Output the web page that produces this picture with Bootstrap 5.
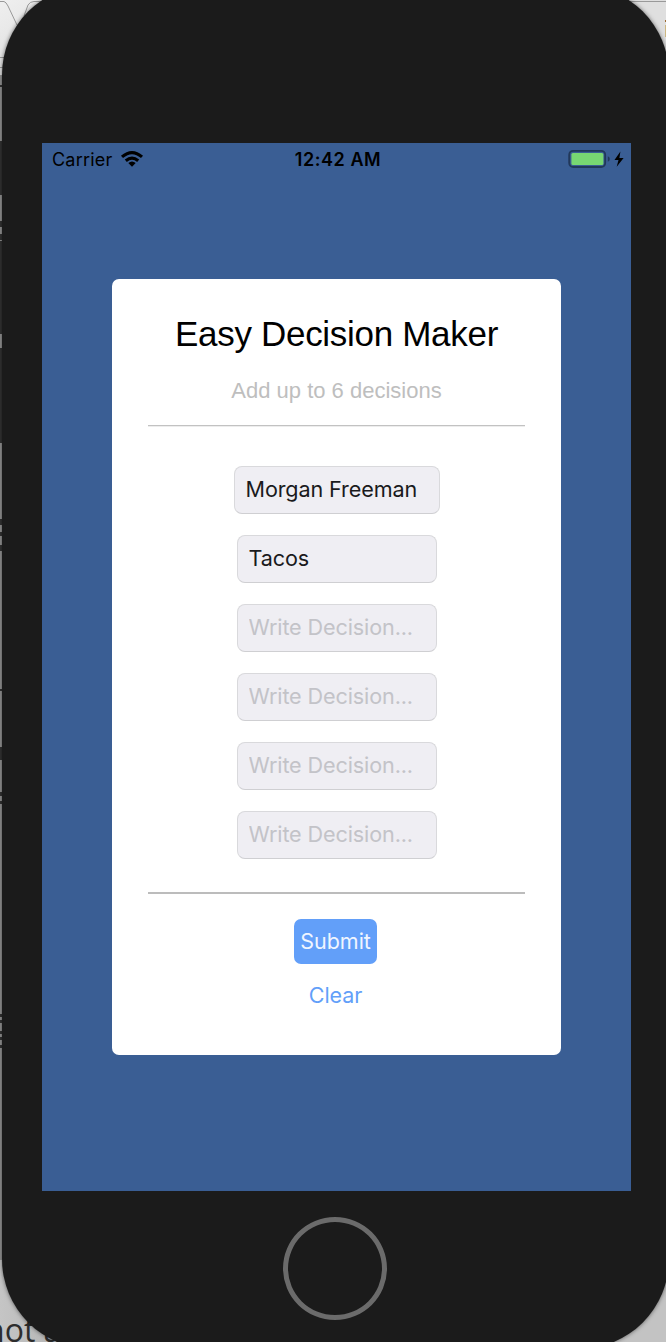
<!DOCTYPE html>
<html lang="en">
<head>
<meta charset="utf-8">
<meta name="viewport" content="width=device-width, initial-scale=1">
<title>Easy Decision Maker</title>
<link href="https://cdn.jsdelivr.net/npm/bootstrap@5.3.0/dist/css/bootstrap.min.css" rel="stylesheet">
<style>
body { font-family: Inter, "Liberation Sans", sans-serif; color: #000; }
.stage { width: 666px; height: 1342px; background: #c4c4c4; }
.backdrop { inset: 0; }
.phone { flex: none; width: 667px; height: 1364px; margin: -15px 0 0 2px; padding: 158px 38px 0 40px; border-radius: 90px; background: #1b1b1b; box-shadow: 0 0 4px rgba(0,0,0,.55); }
.screen { height: 1048px; background: #3a5e94; }
.status { height: 32px; padding: 0 7px 0 10px; font-size: 18px; line-height: 32px; }
.status > * { flex: 1 1 0; }
.carrier { letter-spacing: .2px; }
.carrier span, .clock { padding-top: 1px; }
.clock { font-weight: 600; letter-spacing: .55px; }
.panel { width: 449px; height: 776px; margin: 104px 0 0 70px; padding: 0 36px; border: 0; border-radius: 7px; background: #fff; color: #000; }
.panel h1 { font: 400 35px/40px "Liberation Sans", sans-serif; letter-spacing: -.3px; margin: 35px -10px 0; white-space: nowrap; }
.hint { font: 22px/26px "Liberation Sans", sans-serif; color: #bebebe; margin: 24px 0 0; }
.rule { align-self: stretch; height: 2px; }
.rule-top { margin-top: 21px; background: linear-gradient(#c2c2c2 50%, #ededed 50%); }
.rule-bottom { background: #bcbcbc; margin-top: 33px; }
.choices { gap: 21.1px; margin-top: 39px; }
.choice { width: 200px; height: 48px; padding: 0 11px 2px; border: 1px solid #d9d9dc; border-bottom-color: #cfcfd2; border-radius: 8px; background: #efeef3; color: #1a1a1c; font-size: 21.6px; letter-spacing: -.12px; line-height: 44px; }
.choice:focus { background: #efeef3; }
.choice.wide { width: 206px; }
.choice::placeholder { color: #c3c3c8; opacity: 1; }
.submit { width: 83px; height: 45px; margin: 25px 2px 0 0; padding: 0; border: 0; border-radius: 7px; background: #629ff9; color: #eff5ff; font-size: 21.5px; line-height: 45px; }
.clear { margin: 16px 2px 0 0; padding: 0; border: 0; color: #629ff9; font-size: 21.5px; letter-spacing: -.1px; line-height: 30px; text-decoration: none; }
.home { width: 104px; height: 103px; margin: 26px 0 0 241px; border: 5px solid #6b6b6b; }
</style>
</head>
<body>
<div class="stage position-relative overflow-hidden">
  <svg class="backdrop position-absolute" width="666" height="1342" aria-hidden="true">
    <defs>
      <linearGradient id="tl" x1="0" y1="0" x2="1" y2="1"><stop offset="0" stop-color="#efefef"/><stop offset="1" stop-color="#d0d0d0"/></linearGradient>
      <linearGradient id="bl" x1="0" x2="1"><stop offset="0" stop-color="#c5c5c5"/><stop offset="1" stop-color="#a4a4a4"/></linearGradient>
    </defs>
    <rect width="120" height="80" fill="url(#tl)"/>
    <rect x="600" width="66" height="80" fill="#dfdfdf"/>
    <rect y="1250" width="120" height="92" fill="url(#bl)"/>
    <rect x="590" y="1260" width="76" height="82" fill="#c3c3c3"/>
    <path d="M0 1.5H4Q6 2 8 6L17 25M24 16L28 5Q30 1.5 34 1.5H45M620 1.5H666M0 57.5H6M0 67.5H3" fill="none" stroke="#999" />
    <path d="M665 20h1v2h-1z" fill="#9d6a31"/><path d="M665 25h1v12h-1z" fill="#cdb782"/>
    <rect y="75" width="2" height="1185" fill="#959595"/>
    <path d="M0 85h2v2H0zM0 141h2v54H0zM0 221h2v6H0zM0 234h2v6H0zM0 241h2v93H0zM0 348h2v95H0zM0 519h2v6H0zM0 532h2v4H0zM0 545h2v6H0zM0 689h2v2H0zM0 747h2v13H0zM0 792h2v4H0zM0 801h2v3H0zM0 1014h2v3H0zM0 1020h2v3H0zM0 1031h2v3H0zM0 1037h2v3H0zM0 1045h2v3H0z" fill="#333"/>
    <text x="-15" y="1342" font-family="Open Sans, sans-serif" font-size="32" fill="#2d2d2d">not a</text>
  </svg>
  <main class="phone position-relative">
    <section class="screen">
      <div class="status d-flex align-items-center">
        <div class="carrier d-flex align-items-center">
          <span>Carrier</span>
          <svg class="ms-2" width="24" height="18" viewBox="0 0 24 18" fill="none" stroke="#000" stroke-width="3.2" aria-label="Wi-Fi"><path d="M2 6.9Q12-1.6 22 6.9M5.8 10.7Q12 5.6 18.2 10.7"/><path d="M8.3 13Q12 10 15.7 13L12 16.7Z" fill="#000" stroke="none"/></svg>
        </div>
        <div class="clock text-center">12:42 AM</div>
        <div class="d-flex justify-content-end align-items-center">
          <svg width="56" height="20" viewBox="0 0 56 20" aria-label="Battery charging"><rect x="1.2" y="1.8" width="36" height="16.2" rx="4" fill="none" stroke="#21385a" stroke-width="1.8"/><rect x="3.4" y="4" width="32" height="12" rx="1.5" fill="#77d772"/><path d="M39.8 7.2q2 .7 2 2.8t-2 2.8z" fill="#21385a"/><path d="M52.4 2.5L46.5 11h4l-1.8 6.8L55.6 9h-4.2z" fill="#000"/></svg>
        </div>
      </div>
      <form class="panel card align-items-center">
        <h1>Easy Decision Maker</h1>
        <p class="hint">Add up to 6 decisions</p>
        <div class="rule rule-top"></div>
        <div class="choices d-flex flex-column align-items-center">
          <input class="choice wide form-control" value="Morgan Freeman" aria-label="Decision 1">
          <input class="choice form-control" value="Tacos" aria-label="Decision 2">
          <input class="choice form-control" placeholder="Write Decision..." aria-label="Decision 3">
          <input class="choice form-control" placeholder="Write Decision..." aria-label="Decision 4">
          <input class="choice form-control" placeholder="Write Decision..." aria-label="Decision 5">
          <input class="choice form-control" placeholder="Write Decision..." aria-label="Decision 6">
        </div>
        <div class="rule rule-bottom"></div>
        <button class="submit btn" type="button">Submit</button>
        <button class="clear btn btn-link" type="reset">Clear</button>
      </form>
    </section>
    <div class="home rounded-circle"></div>
  </main>
</div>
<script src="https://cdn.jsdelivr.net/npm/bootstrap@5.3.0/dist/js/bootstrap.bundle.min.js"></script>
</body>
</html>
